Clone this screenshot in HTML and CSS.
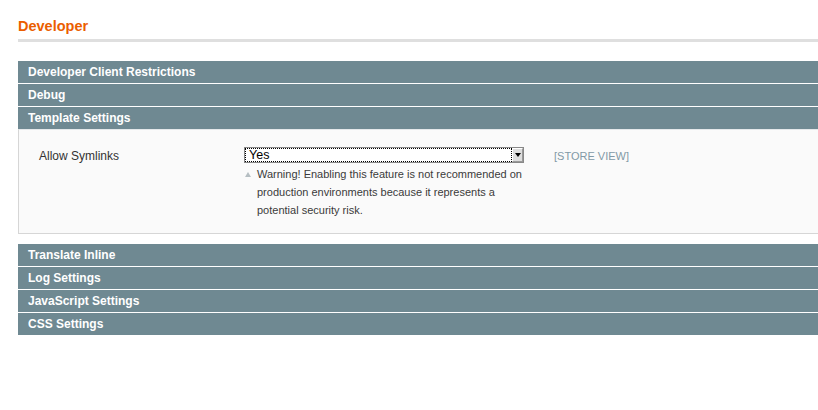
FILE: index.html
```html
<!DOCTYPE html>
<html>
<head>
<meta charset="utf-8">
<link rel="stylesheet" href="styles.css">
</head>
<body>
<div class="page">
  <div class="page-title"><h3>Developer</h3></div>
  <div class="sections">
    <div class="section-head">Developer Client Restrictions</div>
    <div class="section-head">Debug</div>
    <div class="section-head open">Template Settings</div>
    <div class="fieldset">
      <div class="row">
        <div class="label">Allow Symlinks</div>
        <div class="value">
          <div class="select"><span class="select-text">Yes</span><span class="select-btn"><span class="arrow"></span></span></div>
          <div class="note"><span class="tri"></span><span class="note-text">Warning! Enabling this feature is not recommended on production environments because it represents a potential security risk.</span></div>
        </div>
        <div class="scope">[STORE VIEW]</div>
      </div>
    </div>
  </div>
  <div class="sections second">
    <div class="section-head">Translate Inline</div>
    <div class="section-head">Log Settings</div>
    <div class="section-head">JavaScript Settings</div>
    <div class="section-head">CSS Settings</div>
  </div>
</div>
</body>
</html>
```

FILE: styles.css
```css
html, body {
  margin: 0;
  padding: 0;
  background: #fff;
}
body {
  font-family: "Liberation Sans", Arial, sans-serif;
  color: #2f2f2f;
}
.page {
  padding: 0 0 0 18px;
}
.page-title {
  border-bottom: 3px solid #dfdfdf;
  padding-top: 17px;
  height: 22px;
}
.page-title h3 {
  margin: 0;
  font-size: 14.5px;
  line-height: 18px;
  font-weight: bold;
  color: #eb5e00;
}
.sections {
  margin-top: 19px;
}
.sections.second {
  margin-top: 10px;
}
.section-head {
  background: #6f8992;
  color: #fff;
  font-weight: bold;
  font-size: 12px;
  line-height: 22px;
  height: 22px;
  padding-left: 10px;
  margin-bottom: 1px;
}
.section-head.open {
  margin-bottom: 0;
}
.fieldset {
  background: #fafafa;
  border-left: 1px solid #d6d6d6;
  border-bottom: 1px solid #d6d6d6;
  border-top: 1px solid #e4e8ea;
  padding: 17px 0 14px 20px;
}
.row {
  display: flex;
  align-items: flex-start;
}
.label {
  width: 205px;
  font-size: 12px;
  line-height: 16px;
  color: #333;
  padding-top: 1px;
}
.value {
  width: 280px;
}
.select {
  display: flex;
  height: 16px;
  box-sizing: border-box;
  border: 1px solid #888;
  background: #fff;
}
.select-text {
  flex: 1;
  border: 1px dotted #000;
  font-size: 12.5px;
  line-height: 12px;
  padding-left: 3px;
  color: #000;
}
.select-btn {
  width: 11px;
  background: #dedede;
  border-left: 1px solid #fff;
  border-top: 1px solid #fff;
  border-right: 1px solid #999;
  border-bottom: 1px solid #999;
  box-sizing: border-box;
  display: flex;
  align-items: center;
  justify-content: center;
}
.arrow {
  width: 0;
  height: 0;
  border-left: 3px solid transparent;
  border-right: 3px solid transparent;
  border-top: 4px solid #000;
}
.note {
  display: flex;
  margin-top: 2px;
  font-size: 11px;
  line-height: 18px;
  color: #3a3a3a;
}
.tri {
  width: 0;
  height: 0;
  border-left: 3px solid transparent;
  border-right: 3px solid transparent;
  border-bottom: 5px solid #b5bec2;
  margin: 7px 6px 0 1px;
  flex: none;
}
.note-text {
  width: 268px;
}
.scope {
  margin-left: 30px;
  font-size: 11px;
  line-height: 16px;
  padding-top: 1px;
  color: #8299a6;
}
```
